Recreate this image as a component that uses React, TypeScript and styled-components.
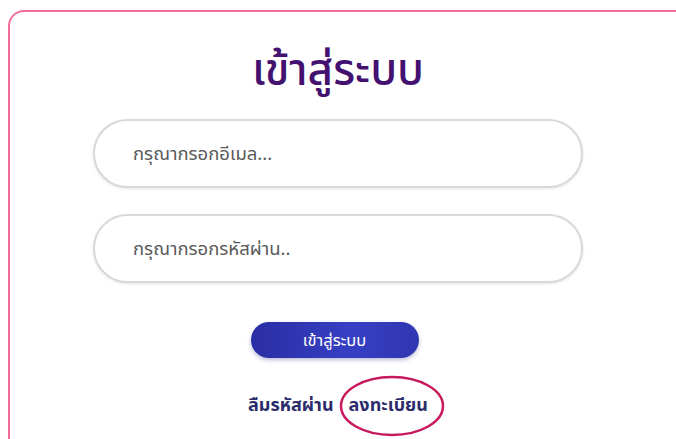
import styled, { createGlobalStyle } from "styled-components";

const GlobalStyle = createGlobalStyle`
  html, body {
    margin: 0;
    padding: 0;
    background: #ffffff;
  }
  body {
    font-family: "Noto Sans Thai", "Noto Sans", "Open Sans", sans-serif;
  }
`;

// Login panel: only the top and left edges show, the rest bleeds off the page
const Card = styled.div`
  box-sizing: border-box;
  margin: 10px 0 0 8px;
  height: calc(100vh - 10px);
  border: 2px solid #f36d97;
  border-right: none;
  border-bottom: none;
  border-radius: 16px 0 0 0;
  padding: 28px 0 0 83px;
`;

const Form = styled.form`
  width: 490px;
  display: flex;
  flex-direction: column;
  align-items: center;
`;

const Title = styled.h1`
  margin: 0 0 15px;
  font-size: 44px;
  font-weight: 500;
  line-height: 64px;
  color: #43116f;
`;

const Field = styled.input`
  box-sizing: border-box;
  width: 100%;
  height: 69px;
  margin-bottom: 26px;
  padding: 0 38px;
  border: 2px solid #d9d9d9;
  border-radius: 35px;
  box-shadow: 0 1px 3px rgba(0, 0, 0, 0.1);
  font-family: inherit;
  font-size: 18.5px;
  color: #333;
  outline: none;

  &::placeholder {
    color: #5a5a5a;
  }
`;

const Submit = styled.button`
  margin: 13px 7px 0 0;
  width: 168px;
  height: 36px;
  border: none;
  border-radius: 18px;
  background: linear-gradient(90deg, #2a2ea3 0%, #3740c4 60%, #2f36b0 100%);
  box-shadow: 0 2px 4px rgba(30, 30, 120, 0.3);
  color: #ffffff;
  font-family: inherit;
  font-size: 16.5px;
  cursor: pointer;
`;

const Links = styled.div`
  margin-top: 34px;
  display: flex;
  gap: 15px;
  align-items: center;
`;

const LinkText = styled.a`
  position: relative;
  font-size: 18px;
  font-weight: 700;
  color: #2b2c6b;
  text-decoration: none;
  cursor: pointer;
`;

// hand-drawn looking ring around the sign-up link
const Ring = styled.svg`
  position: absolute;
  left: -10px;
  top: -17px;
  width: 106px;
  height: 62px;
  pointer-events: none;
`;

export default function App() {
  return (
    <>
      <GlobalStyle />
      <Card>
        <Form onSubmit={(e) => e.preventDefault()}>
          <Title>เข้าสู่ระบบ</Title>
          <Field type="email" placeholder="กรุณากรอกอีเมล..." />
          <Field type="password" placeholder="กรุณากรอกรหัสผ่าน.." />
          <Submit type="submit">เข้าสู่ระบบ</Submit>
          <Links>
            <LinkText>ลืมรหัสผ่าน</LinkText>
            <LinkText>
              ลงทะเบียน
              <Ring viewBox="0 0 106 62">
                <ellipse cx="53" cy="31" rx="51" ry="29" fill="none" stroke="#c8195c" strokeWidth="2.5" />
              </Ring>
            </LinkText>
          </Links>
        </Form>
      </Card>
    </>
  );
}
